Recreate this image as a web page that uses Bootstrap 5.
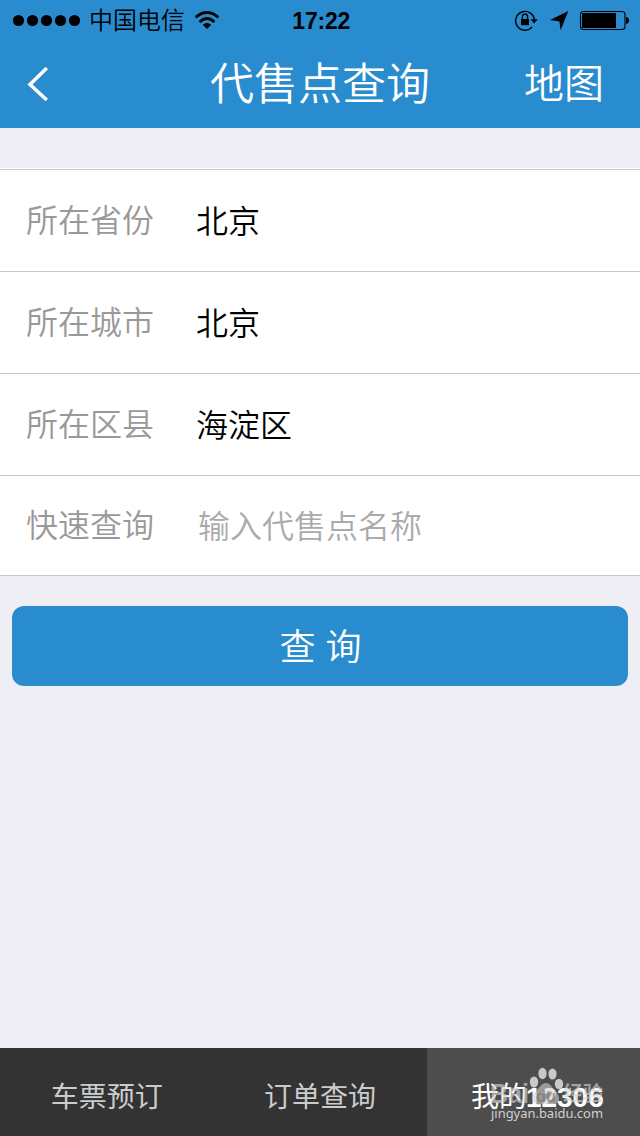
<!DOCTYPE html>
<html lang="zh-CN">
<head>
<meta charset="utf-8">
<meta name="viewport" content="width=device-width, initial-scale=1">
<title>代售点查询</title>
<link rel="stylesheet" href="https://cdn.jsdelivr.net/npm/bootstrap@5.3.0/dist/css/bootstrap.min.css">
<style>
body{background:#efeef4;font-family:"Liberation Sans","Noto Sans CJK SC",sans-serif;font-weight:350;overflow:hidden}
.app-head{background:#298ccf;height:128px}
.status-bar{height:40px;color:#000;font-size:24px;line-height:40px;padding:0 11px 0 12px}
.status-bar>div{flex:1 1 0}
.carrier{margin-left:8px;margin-right:9px;padding-top:2px;line-height:38px}
.clock{font-size:23px;font-weight:700;letter-spacing:-.2px;padding:2px 4px 0 0}
.title-bar{height:88px;padding:0 36px;line-height:86px}
.title-bar>*{flex:1 1 0}
.back-link{margin-left:-10px;margin-right:10px}
.page-title{font-size:44px;font-weight:350;line-height:84px;margin:0;padding-top:2px}
.map-link{font-size:40px;line-height:86px}
.query-form{margin-top:40px;border-top:1px solid #fff;border-bottom:1px solid #c8c7cc}
.query-form .list-group-item{height:102px;padding:2px 26px 0;border-color:#c8c7cc;border-width:0 0 1px;font-size:32px;line-height:98px;color:#000}
.query-form .list-group-item:first-child{height:103px;border-top-width:1px}
.query-form .list-group-item:last-child{height:99px;line-height:96px;border-bottom:0}
.field-name{width:170px;color:#999}
.field-value{padding-top:1px}
.query-form .form-control{font-size:32px;line-height:96px;font-weight:350;padding:0 0 0 2px;color:#000}
.query-form .form-control::placeholder{color:#aaa}
.query-btn{height:80px;margin:30px 12px 0;border-radius:12px;background:#298ccf;border:0;color:#fff;font-size:36px;font-weight:350;line-height:76px;padding:3px 0 0 1px}
.tab-row{height:88px;background:#333}
.tab-row .nav-link{height:88px;padding:2px 0 0;color:#ccc;font-size:28px;font-weight:400;line-height:96px;overflow:hidden}
.tab-row .nav-link.active{background:#4d4d4d;color:#fff;border-radius:0;padding-left:8px}
.tab-row strong{margin-left:-1px}
.watermark{right:35px;bottom:13px;width:116px;height:56px;overflow:visible}
.watermark text{font-family:"Noto Sans","Noto Sans CJK SC",sans-serif}
.watermark .brand{font-family:"Liberation Sans","Noto Sans CJK SC",sans-serif;font-weight:700}
</style>
</head>
<body class="vh-100 d-flex flex-column">
<header class="app-head flex-shrink-0">
  <div class="status-bar d-flex align-items-center">
    <div class="d-flex align-items-center">
      <svg width="69" height="14"><g><circle cx="6.5" cy="7.5" r="5.6"/><circle cx="20.5" cy="7.5" r="5.6"/><circle cx="34.5" cy="7.5" r="5.6"/><circle cx="48.5" cy="7.5" r="5.6"/><circle cx="62.5" cy="7.5" r="5.6"/></g></svg>
      <span class="carrier text-nowrap">中国电信</span>
      <svg class="flex-shrink-0" width="26" height="20" viewBox="0 0 26 20" fill="none" stroke="#000" stroke-width="2.9"><path d="M1.7 7.4Q13-2.4 24.3 7.4"/><path d="M5.6 12Q13 5.2 20.4 12"/><path d="M13 19 8.7 14.8Q13 11.3 17.3 14.8Z" fill="#000" stroke="none"/></svg>
    </div>
    <div class="clock text-center">17:22</div>
    <div class="d-flex justify-content-end align-items-center">
      <svg width="115" height="24" viewBox="0 0 115 24">
        <path d="M18.2 18.9A9.4 9.4 0 1 1 20.4 12" fill="none" stroke="#000" stroke-width="1.4"/>
        <path d="M16.5 11.2h7.3l-3.7 4.2z"/>
        <path d="M7 11h8v6.2h-8z"/><path d="M8.4 11.5V8.7a2.6 2.6 0 0 1 5.2 0v2.8" fill="none" stroke="#000" stroke-width="1.3"/>
        <path d="M54.3 3.1 36 12l9.4 1.4 1.2 8.8z"/>
        <rect x="66.5" y="3.5" width="44.5" height="18" rx="3" fill="none" stroke="#000" stroke-width="1.1"/>
        <rect x="68" y="5" width="34" height="15" rx="1"/>
        <path d="M112 9q3 .7 3 3.6T112 16z"/>
      </svg>
    </div>
  </div>
  <div class="title-bar d-flex align-items-center text-white">
    <a href="#" class="back-link d-flex" aria-label="返回"><svg width="24" height="38" viewBox="0 0 24 38"><path d="M20.8 3 4 19.5 20.8 35" fill="none" stroke="#fff" stroke-width="3.5"/></svg></a>
    <h1 class="page-title text-center text-nowrap">代售点查询</h1>
    <a href="#" class="map-link text-end text-white text-decoration-none">地图</a>
  </div>
</header>
<main class="flex-grow-1">
  <div class="query-form list-group list-group-flush">
    <div class="list-group-item d-flex"><span class="field-name">所在省份</span><span class="field-value">北京</span></div>
    <div class="list-group-item d-flex"><span class="field-name">所在城市</span><span class="field-value">北京</span></div>
    <div class="list-group-item d-flex"><span class="field-name">所在区县</span><span class="field-value">海淀区</span></div>
    <label class="list-group-item d-flex"><span class="field-name flex-shrink-0">快速查询</span><input class="form-control border-0 shadow-none bg-transparent" placeholder="输入代售点名称"></label>
  </div>
  <div class="d-grid"><button class="btn query-btn" type="button">查 询</button></div>
</main>
<footer class="position-relative flex-shrink-0">
  <nav class="tab-row nav nav-pills nav-fill row g-0">
    <a class="nav-link col-4" href="#">车票预订</a>
    <a class="nav-link col-4" href="#">订单查询</a>
    <a class="nav-link col-4 active" href="#">我的<strong>12306</strong></a>
  </nav>
  <svg class="watermark position-absolute" viewBox="0 0 116 56" fill="#d0d0d0">
    <g opacity=".95"><ellipse cx="45" cy="15" rx="4.2" ry="5.5"/><ellipse cx="53.5" cy="6.5" rx="4.1" ry="5.8"/><ellipse cx="63.5" cy="7" rx="4.1" ry="5.5"/><ellipse cx="70" cy="17" rx="4.2" ry="5.3"/></g>
    <path d="M57 16c4.5 0 6 5 10 9 4 4 5 12-3 12H50c-8 0-8-8-4-12 4-3 6-9 11-9z" opacity=".6"/>
    <g class="brand" opacity=".65"><text class="brand" x="1" y="36" font-size="27" textLength="39" lengthAdjust="spacingAndGlyphs">Bai</text><text class="brand" x="47" y="35" font-size="16" fill="#777" textLength="20" lengthAdjust="spacingAndGlyphs">du</text><text class="brand" x="74" y="34" font-size="20" textLength="40" lengthAdjust="spacingAndGlyphs">经验</text></g>
    <text x="2" y="51" font-size="13.4" font-weight="400" textLength="112" lengthAdjust="spacingAndGlyphs">jingyan.baidu.com</text>
  </svg>
</footer>
<script src="https://cdn.jsdelivr.net/npm/bootstrap@5.3.0/dist/js/bootstrap.bundle.min.js"></script>
</body>
</html>
